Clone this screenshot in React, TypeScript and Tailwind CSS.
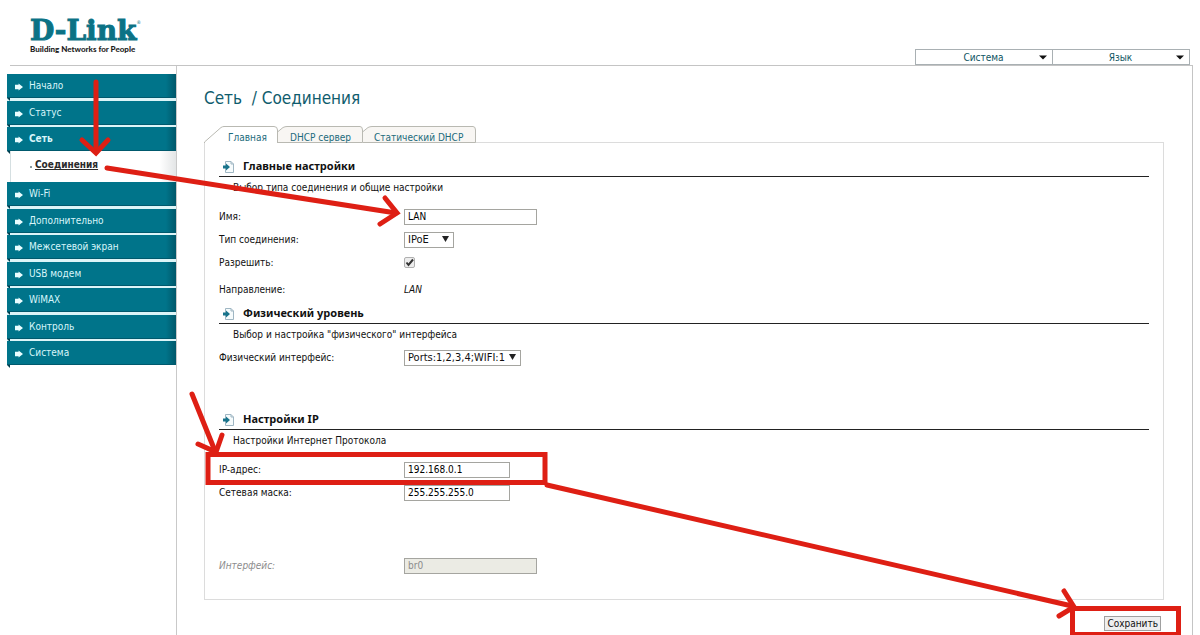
import type { ReactNode } from 'react';

const menuTop = ['Начало', 'Статус', 'Сеть'];
const menuBottom = ['Wi-Fi', 'Дополнительно', 'Межсетевой экран', 'USB модем', 'WiMAX', 'Контроль', 'Система'];

const inputClass = 'h-[16px] border border-[#a5a5a0] bg-white px-[3px] text-[10px] leading-[14px] text-black';

function Logo() {
  return (
    <a href="#" className="ml-[30px] mt-[17px] flex flex-col">
      <span className="flex items-start text-[#0b7285]">
        <span className="font-['DejaVu_Serif','Liberation_Serif',serif] text-[28px] font-bold leading-[28px] [-webkit-text-stroke:1px_#0b7285]">D-Link</span>
        <span className="mt-[3px] text-[5px] leading-[5px]">®</span>
      </span>
      <span className="whitespace-nowrap font-['Lato','Noto_Sans',sans-serif] text-[8px] font-black leading-[8px] text-[#1c1c1c]">
        Building Networks for People
      </span>
    </a>
  );
}

function TopMenu({ name }: { name: string }) {
  return (
    <button className="-ml-px flex h-[16px] w-[138px] items-center border border-[#a9b0b3] bg-white pl-[12px] pr-[5px] text-[10px] text-[#0f5563]">
      <span className="flex-1 text-center">{name}</span>
      <svg width="8" height="5" viewBox="0 0 8 5">
        <path d="M0 0.5H8L4 4.5Z" fill="#111" />
      </svg>
    </button>
  );
}

function MenuItem({ name, active }: { name: string; active?: boolean }) {
  return (
    <li className="relative not-first:odd:mt-[2px] even:mt-[3px]">
      <a
        href="#"
        className={`flex h-[24px] items-center border-b border-[#00596d] bg-linear-to-r from-[#00748a] from-94% to-[#00586b] pl-[8px] text-[10px] text-[#d8f6fa] ${active ? 'font-bold' : ''}`}
      >
        <svg width="8" height="8" viewBox="0 0 9 8" className="mr-[6px] mt-[2px]">
          <path d="M0 1.500H4V0L9 4L4 8V6.500H0Z" fill="#e9fdff" />
        </svg>
        {name}
      </a>
      <svg width="3" height="3" viewBox="0 0 3 3" className="absolute left-0 top-full">
        <path d="M0 0H3V3Z" fill="#003d4c" />
      </svg>
    </li>
  );
}

function Sidebar() {
  return (
    <nav className="w-[169px] shrink-0 pt-[8px]">
      <ul className="bg-[#dcf5f8]">
        {menuTop.map((name) => (
          <MenuItem key={name} name={name} active={name === 'Сеть'} />
        ))}
      </ul>
      <div className="ml-[3px] flex h-[31px] items-center border-l border-[#d5dfe1] bg-linear-to-r from-white from-90% to-[#e3e5e6] pl-[19px]">
        <span className="mr-[3px] h-[2px] w-[2px] bg-[#8a9a9e]"></span>
        <a href="#" className="mb-[4px] text-[10px] font-bold text-[#2b2b2b] underline">
          Соединения
        </a>
      </div>
      <ul className="bg-[#dcf5f8]">
        {menuBottom.map((name) => (
          <MenuItem key={name} name={name} />
        ))}
      </ul>
    </nav>
  );
}

function Tabs() {
  return (
    <div className="relative z-10 -mb-px flex h-[17px] text-[10px] text-[#1c6b7c]">
      <a href="#" className="relative w-[74px] overflow-hidden pl-[24px] pt-[4px] leading-[16px]">
        <svg width="74" height="17" viewBox="0 0 74 17" className="absolute left-0 top-0">
          <path d="M0.5 17V16L17 1.5Q18.500 0.5 20 0.500H70Q73.500 0.500 73.500 4V17" fill="#fff" stroke="#b9b9b2" />
        </svg>
        <span className="relative">Главная</span>
      </a>
      <a href="#" className="relative w-[85px] overflow-hidden pl-[12px] pt-[4px] leading-[16px]">
        <svg width="85" height="17" viewBox="0 0 85 17" className="absolute left-0 top-0">
          <path d="M-0.500 16.500V6L5 1.500Q7 0.500 9 0.500H82Q84.500 0.500 84.500 4V16.500Z" fill="#f8f6f3" stroke="#b9b9b2" />
        </svg>
        <span className="relative">DHCP сервер</span>
      </a>
      <a href="#" className="relative w-[113px] overflow-hidden pl-[11px] pt-[4px] leading-[16px]">
        <svg width="113" height="17" viewBox="0 0 113 17" className="absolute left-0 top-0">
          <path d="M-0.500 16.500V6L5 1.500Q7 0.500 9 0.500H110Q112.500 0.500 112.500 4V16.500Z" fill="#f8f6f3" stroke="#b9b9b2" />
        </svg>
        <span className="relative whitespace-nowrap">Статический DHCP</span>
      </a>
    </div>
  );
}

function Section({ title, text }: { title: string; text: string }) {
  return (
    <div>
      <h2 className="flex h-[21px] items-center border-b border-[#222] pl-[4px] font-['Noto_Sans',sans-serif] text-[11px] font-bold text-[#111]">
        <svg width="11" height="12" viewBox="0 0 11 12" className="mr-[9px] mt-[2px]">
          <path d="M2.500 0.500H8L10.500 3V11.500H2.500Z" fill="#f6fbfc" stroke="#9fb6c3" />
          <path d="M8 0.500V3H10.500" fill="none" stroke="#9fb6c3" />
          <path d="M0 4.500H3V2.500L7 6L3 9.500V7.500H0Z" fill="#19748c" />
        </svg>
        {title}
      </h2>
      <p className="h-[22px] pl-[14px] leading-[22px]">{text}</p>
    </div>
  );
}

function Row({ label, id, muted, children }: { label: string; id: string; muted?: boolean; children: ReactNode }) {
  return (
    <div className="grid h-[23px] grid-cols-[185px_1fr] items-center">
      <label htmlFor={id} className={muted ? 'italic text-[#8c8c8c]' : ''}>
        {label}
      </label>
      <div className="flex items-center">{children}</div>
    </div>
  );
}

function Select({ id, value, width }: { id: string; value: string; width: string }) {
  return (
    <div className={`relative ${width}`}>
      <select id={id} className="block h-[16px] w-full appearance-none border border-[#a5a5a0] bg-white pl-[3px] text-[11px] leading-[14px]">
        <option>{value}</option>
      </select>
      <svg width="7" height="6" viewBox="0 0 7 6" className="pointer-events-none absolute right-[5px] top-[4px]">
        <path d="M0 0H7L3.500 6Z" fill="#222" />
      </svg>
    </div>
  );
}

// red arrows and frames drawn over the page
function Marks() {
  return (
    <svg width="1200" height="635" viewBox="0 0 1200 635" className="pointer-events-none absolute left-0 top-0 z-20" fill="none" stroke="#de1f14" strokeWidth="5" strokeLinecap="round">
      <path d="M96 82V152" />
      <path d="M82 140L96 153L108 140" />
      <path d="M107 168L396 213" />
      <path d="M385 198L397 213L380 224" />
      <path d="M192 394L215 451" />
      <path d="M198 444L216 452L222 435" />
      <path d="M547 485L1072 606" />
      <path d="M1064 591L1074 607L1059 616" />
      <rect x="208" y="454.500" width="337" height="28" strokeLinecap="butt" />
      <rect x="1072.500" y="608.500" width="106" height="26" strokeLinecap="butt" />
    </svg>
  );
}

export default function App() {
  return (
    <div className="relative flex min-h-screen flex-col overflow-hidden bg-white font-['DejaVu_Sans_Condensed','Noto_Sans',sans-serif] text-[10px] text-[#111]">
      <header className="flex h-[65px] items-start justify-between pr-[10px]">
        <Logo />
        <div className="mt-[49px] flex">
          <TopMenu name="Система" />
          <TopMenu name="Язык" />
        </div>
      </header>

      <div className="ml-[10px] mr-[7px] flex flex-1 border-r border-t border-[#c4c4c4]">
        <div className="-ml-[3px] flex">
          <Sidebar />
        </div>
        <main className="min-w-0 flex-1 border-l border-[#c9c9c9] pl-[27px] pr-[28px]">
          <h1 className="mt-[20px] h-[40px] whitespace-pre text-[17px] leading-[24px] text-[#0f5c6d]">Сеть  / Соединения</h1>
          <Tabs />
          <form>
            <div className="border border-[#dcdcdc] px-[14px] pb-[22px] pt-[13px]">
              <Section title="Главные настройки" text="Выбор типа соединения и общие настройки" />
              <div className="mt-[6px]">
                <Row label="Имя:" id="name">
                  <input id="name" defaultValue="LAN" className={`${inputClass} w-[133px]`} />
                </Row>
                <Row label="Тип соединения:" id="type">
                  <Select id="type" value="IPoE" width="w-[50px]" />
                </Row>
                <Row label="Разрешить:" id="allow">
                  <span className="relative block h-[11px] w-[11px]">
                    <input id="allow" type="checkbox" defaultChecked className="block h-[11px] w-[11px] appearance-none rounded-[2px] border border-[#b0b0b0] bg-[#ededed]" />
                    <svg width="11" height="11" viewBox="0 0 11 11" className="pointer-events-none absolute left-0 top-0">
                      <path d="M2.500 5.500L4.500 8L9 2.500" fill="none" stroke="#333" strokeWidth="2" />
                    </svg>
                  </span>
                </Row>
              </div>
              <div className="mt-[4px]">
                <Row label="Направление:" id="direction">
                  <output id="direction" className="italic">LAN</output>
                </Row>
              </div>

              <div className="mt-[2px]">
                <Section title="Физический уровень" text={'Выбор и настройка "физического" интерфейса'} />
                <Row label="Физический интерфейс:" id="phys">
                  <Select id="phys" value="Ports:1,2,3,4;WIFI:1" width="w-[117px]" />
                </Row>
              </div>

              <div className="mt-[40px]">
                <Section title="Настройки IP" text="Настройки Интернет Протокола" />
                <div className="mt-[6px]">
                  <Row label="IP-адрес:" id="ip">
                    <input id="ip" defaultValue="192.168.0.1" className={`${inputClass} w-[106px]`} />
                  </Row>
                  <Row label="Сетевая маска:" id="mask">
                    <input id="mask" defaultValue="255.255.255.0" className={`${inputClass} w-[106px]`} />
                  </Row>
                </div>
              </div>

              <div className="mt-[50px]">
                <Row label="Интерфейс:" id="iface" muted>
                  <input id="iface" disabled defaultValue="br0" className="h-[16px] w-[133px] border border-[#a5a5a0] bg-[#ebebe4] px-[3px] text-[10px] leading-[14px] text-[#8c8c8c]" />
                </Row>
              </div>
            </div>
            <div className="flex justify-end pr-[3px] pt-[16px]">
              <button type="button" className="h-[15px] border border-[#a0a0a0] bg-[#efefef] px-[2px] text-[10px] leading-[13px]">
                Сохранить
              </button>
            </div>
          </form>
        </main>
      </div>
      <Marks />
    </div>
  );
}
